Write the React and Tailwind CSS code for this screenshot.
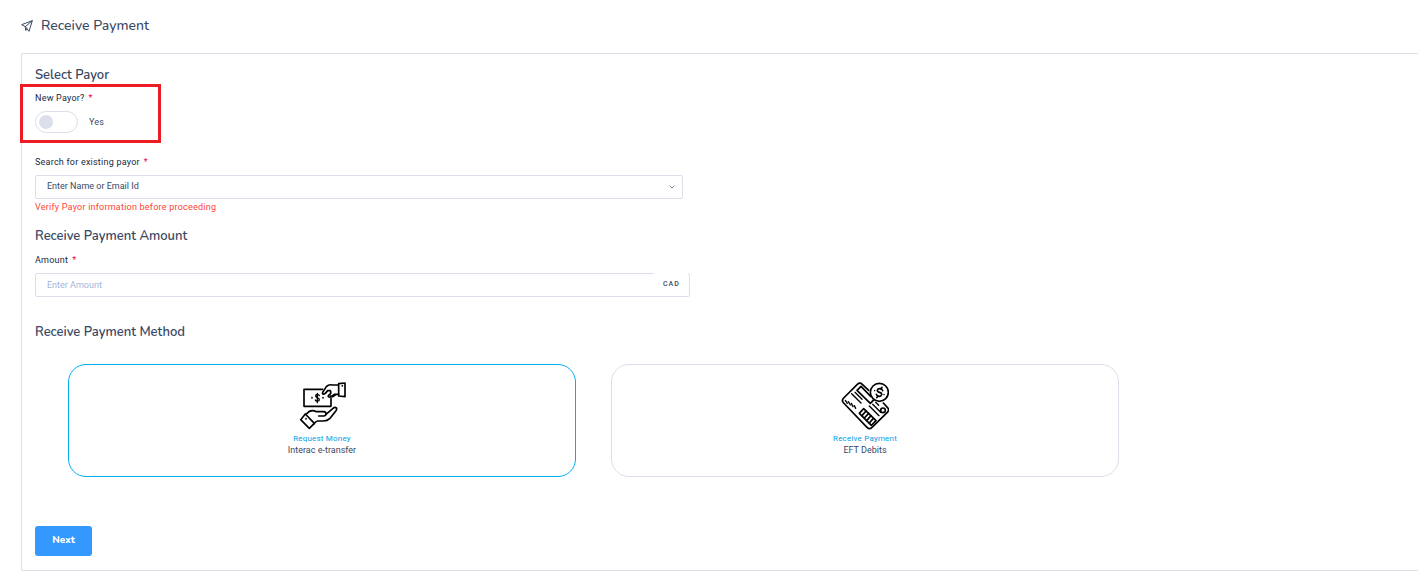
import React, { useState } from 'react';
import { ChevronDown } from 'lucide-react';

const SendIcon = () => (
    <svg viewBox="0 0 36 36" className="w-3 h-3 text-[#3b4863]" fill="none" stroke="currentColor" strokeWidth="3" strokeLinejoin="round" aria-hidden="true">
        <path d="M34 2 L2 14 L13 20 L24 34 Z" />
        <path d="M34 2 L13 20 L14 31 L19 27" />
    </svg>
);

const RequestMoneyIcon = () => (
    <svg viewBox="54 35 144 144" className="w-12 h-12" fill="none" stroke="#000" strokeWidth="5" strokeLinecap="round" strokeLinejoin="round" aria-hidden="true">
        {/* bank note */}
        <path d="M128 57 H72 V108 H153 V84" />
        <path d="M118 76 C116 71 107 71 107 77 C107 83 118 81 118 88 C118 94 108 94 106 89 M112 69 V97" strokeWidth="4" />
        <path d="M96 82 V83 M129 82 V83" strokeWidth="5" />
        {/* upper hand */}
        <path d="M175 44 H157 C149 42 144 44 139 49 L128 66 C126 72 133 73 136 69 L143 61 H151 C155 68 151 72 146 75 C141 81 151 82 156 77 L163 72 H176" />
        <path d="M152 77 C157 82 162 78 166 73" />
        <path d="M176 40 L195 38 V79 L176 77 Z" />
        <path d="M187 46 V47" strokeWidth="5" />
        {/* lower hand */}
        <path d="M80 130 C89 119 98 118 109 124 H131 C141 125 140 136 131 137 H116" />
        <path d="M138 132 L159 114 C166 108 174 113 168 121 L149 145 C143 151 137 152 130 152 H113 C108 152 105 157 101 162" />
        <path d="M76 131 L103 159 L88 174 L62 148 Z" />
        <path d="M78 145 V146" strokeWidth="5" />
    </svg>
);

const DebitCardIcon = () => (
    <svg viewBox="63 35 144 144" className="w-12 h-12" fill="none" stroke="#000" strokeWidth="5" strokeLinecap="round" strokeLinejoin="round" aria-hidden="true">
        {/* card */}
        <path d="M146 60 L127 42 C122 37 117 37 112 42 L71 83 C66 88 66 93 71 98 L141 171 C146 176 151 176 156 171 L202 126 C207 121 207 116 202 111 L190 98" />
        {/* stripe */}
        <path d="M123 48 L111 60 L151 99 L162 88 M123 48 L152 78" />
        {/* printed lines */}
        <path d="M95 70 L123 98 M105 66 L126 87" strokeWidth="4" />
        <path d="M76 90 L82 99 M85 94 L91 104 M94 99 L99 109 M103 106 L107 114" strokeWidth="4" />
        <path d="M148 107 L177 136 M158 102 L182 126 M167 96 L176 105" strokeWidth="4" />
        {/* bar code */}
        <path d="M131 115 L168 151 L154 165 L118 129 Z" />
        <path d="M138 122 L126 136 M146 129 L133 143 M153 136 L140 151 M160 144 L148 158" strokeWidth="5" />
        <circle cx="189" cy="120" r="7" />
        {/* coin */}
        <circle cx="178" cy="66" r="27" fill="#fff" />
        <path d="M188 61 C186 53 174 53 172 60 C171 68 187 64 185 73 C183 81 172 79 169 72 M186 51 L182 56 M174 77 L170 82" />
        <path d="M164 60 V61 M192 72 V73" strokeWidth="4" />
    </svg>
);

const methods = [
    { id: 'interac', title: 'Request Money', detail: 'Interac e-transfer', Icon: RequestMoneyIcon },
    { id: 'eft', title: 'Receive Payment', detail: 'EFT Debits', Icon: DebitCardIcon },
];

const SectionTitle = ({ children }) => (
    <h2 className="font-['Nunito','Noto_Sans',sans-serif] text-[13px] leading-5 font-semibold text-[#3b4863]">{children}</h2>
);

const FieldLabel = ({ htmlFor, children }) => (
    <label htmlFor={htmlFor} className="flex gap-1 text-[9px] leading-4 tracking-wide text-[#1c273c]">
        {children} <span className="text-[#f5003d]">*</span>
    </label>
);

const App = () => {
    const [newPayor, setNewPayor] = useState(false);
    const [method, setMethod] = useState('interac');

    return (
        <main className="bg-white pl-[21px] pt-4 pb-3 font-[Roboto,sans-serif] text-[#3b4863]">
            <header className="flex items-center gap-2">
                <SendIcon />
                <h1 className="font-['Nunito','Noto_Sans',sans-serif] text-[14px] leading-5 font-medium">Receive Payment</h1>
            </header>

            <form className="mt-[17px] rounded-l-xs border border-r-0 border-[#dcdfea] pt-[11px] pb-[14px] pl-[13px] pr-[73px]" onSubmit={(e) => e.preventDefault()}>
                <SectionTitle>Select Payor</SectionTitle>
                <div className="-mt-px -ml-[15px] w-[141px] border-3 border-[#ed1c24] pt-[3px] pb-[7px] pl-3">
                    <FieldLabel htmlFor="new-payor">New Payor?</FieldLabel>
                    <div className="mt-[5px] flex items-center gap-[11px]">
                        <input
                            id="new-payor"
                            type="checkbox"
                            checked={newPayor}
                            onChange={(e) => setNewPayor(e.target.checked)}
                            className="flex h-[22px] w-[43px] appearance-none items-center rounded-full border border-[#dcdfea] px-[3px] before:size-[14px] before:rounded-full before:bg-[#dcdfea] checked:justify-end checked:before:bg-[#3399ff]"
                        />
                        <span className="text-[9px] leading-4 tracking-wide">Yes</span>
                    </div>
                </div>

                <div className="mt-[11px] w-1/2 pr-[7px]">
                    <FieldLabel htmlFor="payor">Search for existing payor</FieldLabel>
                    <div className="mt-[5px] grid items-center">
                        <select id="payor" className="col-start-1 row-start-1 h-6 w-full appearance-none rounded-xs border border-[#dcdfea] bg-white px-[11px] text-[9px] text-[#3b4863]">
                            <option>Enter Name or Email Id</option>
                        </select>
                        <ChevronDown className="pointer-events-none col-start-1 row-start-1 mr-[7px] size-2 justify-self-end" />
                    </div>
                    <p className="text-[9px] leading-4 tracking-wide text-[#ff4433]">Verify Payor information before proceeding</p>
                </div>

                <div className="mt-[11px]">
                    <SectionTitle>Receive Payment Amount</SectionTitle>
                </div>
                <div className="mt-[6px] w-1/2">
                    <FieldLabel htmlFor="amount">Amount</FieldLabel>
                    <div className="mt-[5px] grid">
                        <input
                            id="amount"
                            type="text"
                            placeholder="Enter Amount"
                            className="col-start-1 row-start-1 h-6 w-full rounded-xs border border-[#dcdfea] px-[11px] text-[9px] placeholder:text-[#a5b4da]"
                        />
                        <span className="pointer-events-none col-start-1 row-start-1 mr-[2px] h-[22px] w-[34px] justify-self-end bg-white pl-[9px] text-[7px] leading-[22px] font-medium tracking-[1px]">CAD</span>
                    </div>
                </div>

                <div className="mt-[25px]">
                    <SectionTitle>Receive Payment Method</SectionTitle>
                </div>
                <div className="mt-[22px] grid grid-cols-2 gap-[35px] pl-[33px] pr-[226px]">
                    {methods.map(({ id, title, detail, Icon }) => (
                        <button
                            key={id}
                            type="button"
                            aria-pressed={method === id}
                            onClick={() => setMethod(id)}
                            className={`flex flex-col items-center rounded-[18px] border pt-[17px] pb-5 ${method === id ? 'border-[#00aeef]' : 'border-[#dcdfea]'}`}
                        >
                            <Icon />
                            <span className="mt-[3px] text-[8px] leading-3 tracking-wide text-[#00a2e8]">{title}</span>
                            <span className="-mt-px text-[9px] leading-3">{detail}</span>
                        </button>
                    ))}
                </div>

                <button type="submit" className="mt-[49px] block h-[30px] w-[57px] rounded-[3px] bg-[#3399ff] pb-[2px] font-['Nunito','Noto_Sans',sans-serif] text-[10px] font-extrabold text-white">
                    Next
                </button>
            </form>
        </main>
    );
};

export default App;
